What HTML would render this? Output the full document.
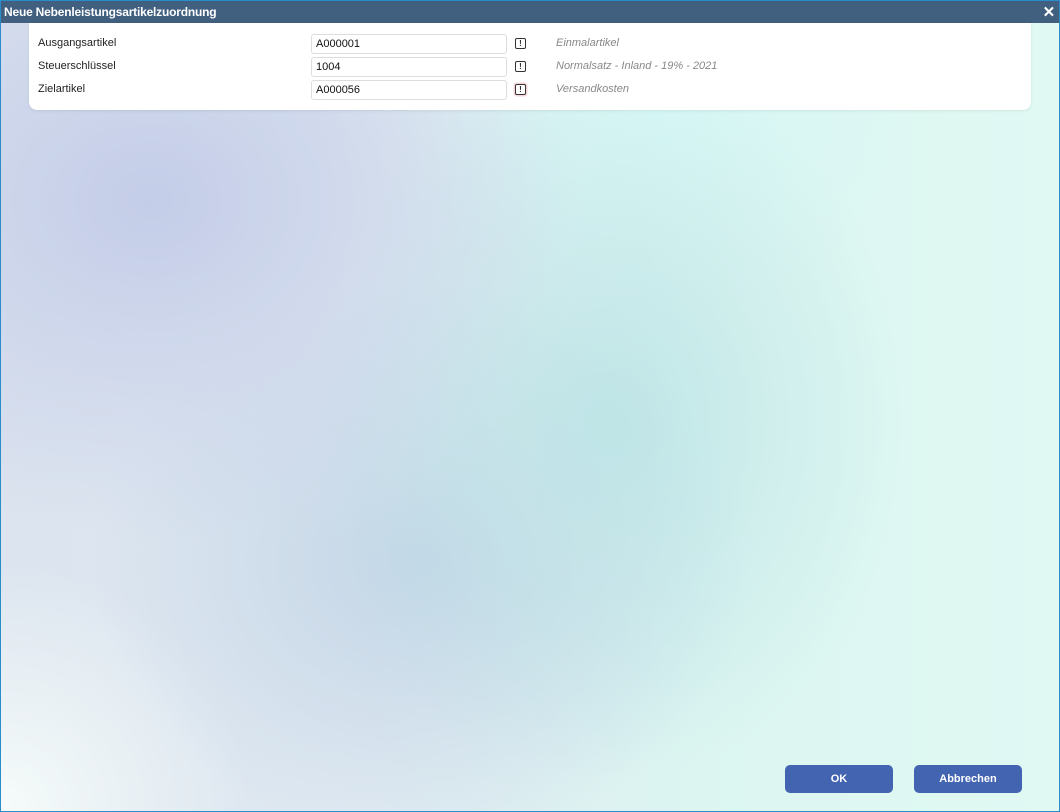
<!DOCTYPE html>
<html><head><meta charset="utf-8"><style>
html,body{margin:0;padding:0;width:1060px;height:812px;overflow:hidden;font-family:"Liberation Sans",Arial,sans-serif;}
.win{position:absolute;left:0;top:0;width:1058px;height:810px;border:1px solid #2a8cc8;
background:
radial-gradient(ellipse 420px 340px at 150px 200px, rgba(196,205,232,1), rgba(196,205,232,0) 100%),
radial-gradient(ellipse 300px 360px at 610px 420px, rgba(188,228,230,0.9), rgba(188,228,230,0) 100%),
radial-gradient(ellipse 330px 280px at 420px 560px, rgba(194,212,230,0.95), rgba(194,212,230,0) 100%),
radial-gradient(ellipse 260px 200px at 660px 110px, rgba(214,248,246,0.9), rgba(214,248,246,0) 100%),
radial-gradient(ellipse 250px 250px at 0px 812px, rgba(246,252,250,1), rgba(246,252,250,0) 100%),
linear-gradient(90deg,#dce4ef 0%,#dfe9f1 35%,#dcf5f1 65%,#e0f9f3 100%);}
.title{position:absolute;left:0;top:0;right:0;height:22px;background:#415f7f;color:#fff;font-weight:bold;font-size:12px;line-height:23px;padding-left:3px;letter-spacing:-0.2px}
.x{position:absolute;right:4px;top:0;font-size:15px;font-weight:bold}
.card{position:absolute;left:28px;top:22px;width:1002px;height:87px;background:#fff;border-radius:0 0 8px 8px;box-shadow:0 1px 3px rgba(0,0,0,0.08)}
.row{position:absolute;left:0;height:20px;width:100%}
.lbl{position:absolute;left:9px;top:3px;font-size:11px;color:#222}
.inp{position:absolute;left:282px;top:0;width:190px;height:18px;border:1px solid #ddd;border-radius:3px;font-size:11px;line-height:18px;padding-left:4px;color:#111}
.ic{position:absolute;left:486px;top:4px;width:9px;height:9px;border:1px solid #333;border-radius:2px;font-size:8px;line-height:9px;text-align:center;font-weight:bold;color:#333}
.ic.r{box-shadow:0 0 0 1.5px #f4d4d4}
.desc{position:absolute;left:527px;top:3px;font-size:11px;font-style:italic;color:#888}
.btn{position:absolute;top:764px;height:28px;background:#4364b0;border-radius:5px;color:#fff;font-weight:bold;font-size:11px;line-height:29px;text-align:center}
</style></head><body>
<div class="win">
<div class="title">Neue Nebenleistungsartikelzuordnung<span class="x">✕</span></div>
<div class="card">
<div class="row" style="top:11px"><span class="lbl">Ausgangsartikel</span><div class="inp">A000001</div><div class="ic">!</div><span class="desc">Einmalartikel</span></div>
<div class="row" style="top:34px"><span class="lbl">Steuerschlüssel</span><div class="inp">1004</div><div class="ic">!</div><span class="desc">Normalsatz - Inland - 19% - 2021</span></div>
<div class="row" style="top:57px"><span class="lbl">Zielartikel</span><div class="inp">A000056</div><div class="ic r">!</div><span class="desc">Versandkosten</span></div>
</div>
<div class="btn" style="left:784px;width:108px">OK</div>
<div class="btn" style="left:913px;width:108px">Abbrechen</div>
</div>
</body></html>
